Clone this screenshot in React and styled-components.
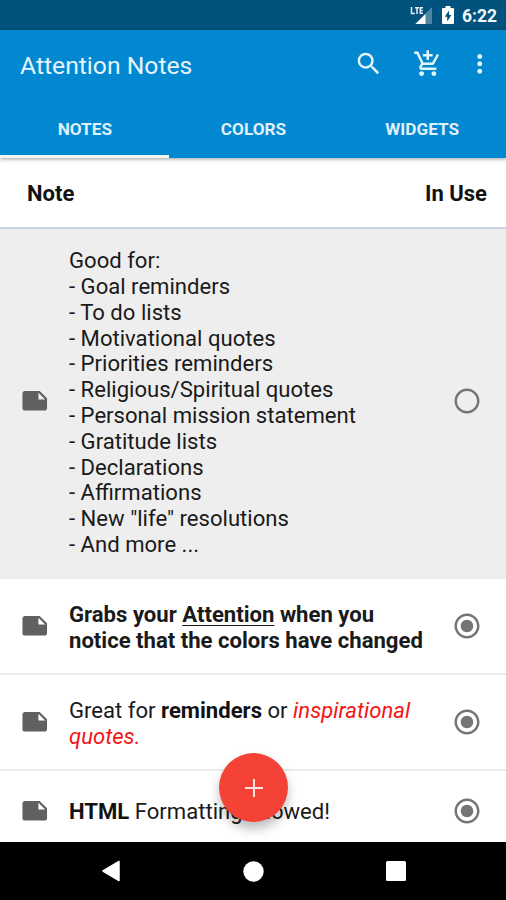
import React, { Component } from 'react';
import styled, { createGlobalStyle } from 'styled-components';
import {
    MdSearch,
    MdAddShoppingCart,
    MdMoreVert,
    MdNote,
    MdRadioButtonChecked,
    MdRadioButtonUnchecked
} from 'react-icons/md';

const GlobalStyle = createGlobalStyle`
    * {
        box-sizing: border-box;
    }

    body {
        margin: 0;
        background: #fff;
        font-family: Roboto, sans-serif;
        color: #121212;
    }

    svg {
        display: block;
        flex: none;
    }
`;

const Screen = styled.div`
    position: relative;
    display: flex;
    flex-direction: column;
    width: 506px;
    height: 900px;
    overflow: hidden;
`;

const StatusBar = styled.div`
    flex: none;
    display: flex;
    justify-content: flex-end;
    height: 30px;
    padding-right: 9px;
    background: #01527d;
    color: #f2f7fa;
`;

const Clock = styled.span`
    width: 35px;
    margin-left: 8px;
    font-size: 17.5px;
    font-weight: 700;
    line-height: 32px;
    white-space: nowrap;
`;

const Header = styled.header`
    position: relative;
    z-index: 1;
    flex: none;
    height: 127.5px;
    background: #0288d1;
    box-shadow: 0 1px 4px rgba(0, 0, 0, 0.4);
`;

const Toolbar = styled.div`
    display: flex;
    align-items: center;
    height: 69px;
    padding: 0 12px 2px 20px;
    color: #e6f3fa;
`;

const Title = styled.h1`
    flex: 1;
    margin: 4px 0 0;
    font-size: 24.7px;
    font-weight: 400;
    white-space: nowrap;
`;

const Action = styled.button`
    display: flex;
    padding: 0;
    margin: 0 0 0 ${props => props.$gap || 0}px;
    border: 0;
    background: none;
    color: inherit;
`;

const Tabs = styled.nav`
    display: grid;
    grid-template-columns: repeat(3, 1fr);
    height: 58.5px;
`;

const Tab = styled.a`
    display: flex;
    align-items: center;
    justify-content: center;
    padding: 5px 0 0 1px;
    border-bottom: 3px solid ${props => (props.$active ? '#f5f5f5' : 'transparent')};
    color: #dff0fa;
    font-size: 17.2px;
    font-weight: 700;
    text-transform: uppercase;
`;

const ListHeader = styled.div`
    flex: none;
    display: flex;
    align-items: center;
    justify-content: space-between;
    height: 71.5px;
    padding: 2px 19px 0 27px;
    border-bottom: 2px solid #c8d5e0;
    font-size: 22px;
    font-weight: 700;
`;

const List = styled.div`
    flex: 1;
    min-height: 0;
    overflow: hidden;
`;

const Row = styled.div`
    display: grid;
    grid-template-columns: 49px 1fr 30px;
    align-items: center;
    height: ${props => props.$height}px;
    padding: 0 24px 0 20px;
    border-bottom: 2px solid #ececec;
    background: ${props => (props.$shaded ? '#eee' : '#fff')};
    color: #606060;
`;

const Text = styled.div`
    padding-top: ${props => props.$drop || 0}px;
    color: #1a1a1a;
    font-size: 22.1px;
    font-weight: ${props => (props.$bold ? 700 : 400)};
    line-height: 25.8px;
    white-space: pre;

    b {
        font-weight: 700;
        color: #121212;
    }

    u {
        text-decoration-thickness: 1px;
        text-underline-offset: 3px;
        text-decoration-skip-ink: none;
    }

    em {
        color: #f51414;
    }
`;

const Icon = styled.span`
    padding-bottom: ${props => props.$lift || 0}px;
    color: ${props => props.$color || 'inherit'};
`;

const Fab = styled.button`
    position: absolute;
    left: 219px;
    top: 753px;
    z-index: 2;
    display: flex;
    align-items: center;
    justify-content: center;
    width: 69px;
    height: 69px;
    padding: 0;
    border: 0;
    border-radius: 50%;
    background: #f44336;
    box-shadow: 0 7px 11px rgba(0, 0, 0, 0.26);
`;

const NavBar = styled.div`
    flex: none;
    display: grid;
    grid-template-columns: repeat(3, 142.5px);
    justify-content: center;
    justify-items: center;
    align-items: center;
    height: 58px;
    background: #000;
`;

const goodFor = [
    'Good for:',
    '- Goal reminders',
    '- To do lists',
    '- Motivational quotes',
    '- Priorities reminders',
    '- Religious/Spiritual quotes',
    '- Personal mission statement',
    '- Gratitude lists',
    '- Declarations',
    '- Affirmations',
    '- New "life" resolutions',
    '- And more ...'
];

const notes = [
    { id: 1, height: 350, shaded: true, lift: 4, content: goodFor.join('\n') },
    {
        id: 2,
        height: 96,
        used: true,
        bold: true,
        drop: 4,
        content: <>Grabs your <u>Attention</u> when you{'\n'}notice that the colors have changed</>
    },
    {
        id: 3,
        height: 96,
        used: true,
        drop: 4,
        content: <>Great for <b>reminders</b> or <em>inspirational{'\n'}quotes.</em></>
    },
    { id: 4, height: 81, used: true, drop: 2, content: <><b>HTML</b> Formatting allowed!</> }
];

const Signal = () => (
    <svg width="24" height="30" viewBox="0 0 24 30">
        <path d="M22 7V24H5Z" fill="#4d86a4" />
        <path d="M15.5 14V24H5.5Z" fill="#fff" />
        <path d="M1.5 7V13.5H5M5 7.7H9M7 7.7V14M13 7.7H10.3V13.3H13M10.3 10.5H12.7" fill="none" stroke="#e4edf3" strokeWidth="1.5" />
    </svg>
);

const Battery = () => (
    <svg width="20" height="30" viewBox="-8 0 20 30">
        <path d="M3.5 6H8.5V8H11Q12 8 12 9V23Q12 24 11 24H1Q0 24 0 23V9Q0 8 1 8H3.5Z" fill="#fff" />
        <path d="M7 10.5L2.8 16.8H5.2V21.5L9.4 15H7Z" fill="#01527d" />
    </svg>
);

class App extends Component {
    render() {
        return (
            <React.Fragment>
                <GlobalStyle />
                <Screen>
                    <StatusBar>
                        <Signal />
                        <Battery />
                        <Clock>6:22</Clock>
                    </StatusBar>

                    <Header>
                        <Toolbar>
                            <Title>Attention Notes</Title>
                            <Action aria-label="Search"><MdSearch size={29.5} /></Action>
                            <Action aria-label="Shop" $gap={29.5}><MdAddShoppingCart size={29.5} /></Action>
                            <Action aria-label="More" $gap={22.5}><MdMoreVert size={29.5} /></Action>
                        </Toolbar>
                        <Tabs>
                            <Tab $active>Notes</Tab>
                            <Tab>Colors</Tab>
                            <Tab>Widgets</Tab>
                        </Tabs>
                    </Header>

                    <ListHeader>
                        <span>Note</span>
                        <span>In Use</span>
                    </ListHeader>

                    <List>
                        {notes.map(note => (
                            <Row key={note.id} $height={note.height} $shaded={note.shaded}>
                                <Icon $lift={note.lift}><MdNote size={29.5} /></Icon>
                                <Text $bold={note.bold} $drop={note.drop}>{note.content}</Text>
                                <Icon $lift={note.lift} $color="#757575">
                                    {note.used ? <MdRadioButtonChecked size={30} /> : <MdRadioButtonUnchecked size={30} />}
                                </Icon>
                            </Row>
                        ))}
                    </List>

                    <Fab aria-label="Add note">
                        <svg width="18" height="18" viewBox="0 0 18 18">
                            <path d="M9 0V18M0 9H18" stroke="#fde3e0" strokeWidth="2" />
                        </svg>
                    </Fab>

                    <NavBar>
                        <svg width="20" height="22" viewBox="0 0 20 22">
                            <path d="M18 1.5V20.5L2 11Z" fill="#fff" stroke="#fff" strokeWidth="1.5" strokeLinejoin="round" />
                        </svg>
                        <svg width="21" height="21" viewBox="0 0 21 21">
                            <circle cx="10.5" cy="10.5" r="10.2" fill="#fff" />
                        </svg>
                        <svg width="20" height="20" viewBox="0 0 20 20">
                            <rect width="20" height="20" rx="1.5" fill="#fff" />
                        </svg>
                    </NavBar>
                </Screen>
            </React.Fragment>
        );
    }
}

export default App;
